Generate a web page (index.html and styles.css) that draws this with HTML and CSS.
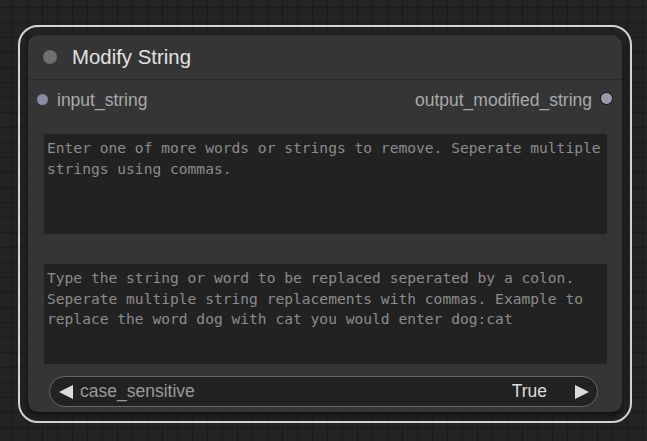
FILE: index.html
```html
<!DOCTYPE html>
<html>
<head>
<meta charset="utf-8">
<link rel="stylesheet" href="styles.css">
</head>
<body>
<div class="canvas">
  <div class="selection"></div>
  <div class="node">
    <div class="title">
      <span class="title-dot"></span>
      <span class="title-text">Modify String</span>
    </div>
    <div class="slots">
      <div class="slot slot-in"><span class="pin pin-in"></span><span>input_string</span></div>
      <div class="slot slot-out"><span>output_modified_string</span><span class="pin pin-out"></span></div>
    </div>
    <div class="widgets">
      <div class="textbox">Enter one of more words or strings to remove. Seperate multiple strings using commas.</div>
      <div class="textbox">Type the string or word to be replaced seperated by a colon. Seperate multiple string replacements with commas. Example to replace the word dog with cat you would enter dog:cat</div>
      <div class="combo">
        <span class="arrow arrow-left"></span>
        <span class="combo-label">case_sensitive</span>
        <span class="combo-value">True</span>
        <span class="arrow arrow-right"></span>
      </div>
    </div>
  </div>
</div>
</body>
</html>
```

FILE: styles.css
```css
html, body {
  margin: 0;
  padding: 0;
}
body {
  width: 647px;
  height: 441px;
  overflow: hidden;
  background-color: #222222;
  font-family: "Liberation Sans", Arial, sans-serif;
}
.canvas {
  position: relative;
  width: 647px;
  height: 441px;
  background-color: #232323;
  background-image:
    linear-gradient(#1b1b1b 1px, transparent 1px),
    linear-gradient(90deg, #1b1b1b 1px, transparent 1px);
  background-size: 15px 15px;
  background-position: 12px 7px;
}
.selection {
  position: absolute;
  left: 18px;
  top: 25px;
  width: 610px;
  height: 394px;
  border: 2px solid #d4d4d4;
  border-radius: 20px;
}
.node {
  position: absolute;
  left: 28px;
  top: 35px;
  width: 594px;
  height: 377px;
  background: #353535;
  border-radius: 10px;
  box-shadow: 0 3px 6px rgba(0, 0, 0, 0.55);
  display: flex;
  flex-direction: column;
}
.title {
  height: 44px;
  border-bottom: 1px solid #2a2a2a;
  display: flex;
  align-items: center;
  gap: 15px;
  padding-left: 15px;
}
.title-dot {
  width: 14px;
  height: 14px;
  border-radius: 50%;
  background: #6f6f6f;
}
.title-text {
  color: #e2e2e2;
  font-size: 20.4px;
}
.slots {
  margin-top: 10px;
  height: 20px;
  display: flex;
  justify-content: space-between;
  align-items: center;
  padding: 0 9px 0 9px;
  color: #a9a9a9;
  font-size: 17.5px;
}
.slot {
  display: flex;
  align-items: center;
  gap: 9px;
}
.slot-out {
  gap: 8px;
}
.pin {
  width: 11px;
  height: 11px;
  border-radius: 50%;
  background: #8a8aa0;
}
.pin-in {
  margin-top: -2px;
}
.pin-out {
  box-sizing: border-box;
  width: 13px;
  height: 13px;
  border: 1.5px solid #111;
  background: #9a9aaa;
  margin-top: -3px;
}
.widgets {
  margin-top: 24px;
  padding: 0 15px 0 16px;
  display: flex;
  flex-direction: column;
  gap: 30px;
}
.textbox {
  height: 100px;
  box-sizing: border-box;
  background: #222222;
  padding: 4px 3px 0 3px;
  color: #8c8c8c;
  font-family: "DejaVu Sans Mono", monospace;
  font-size: 14.6px;
  line-height: 20.5px;
}
.combo {
  margin: -18px 9px 0 5px;
  height: 31px;
  box-sizing: border-box;
  border: 1px solid #666;
  border-radius: 16px;
  background: #222222;
  display: flex;
  align-items: center;
  padding: 0 8px 0 9px;
  font-size: 17.5px;
}
.arrow {
  width: 0;
  height: 0;
  border-top: 7.5px solid transparent;
  border-bottom: 7.5px solid transparent;
}
.arrow-left {
  border-right: 14px solid #dcdcdc;
}
.arrow-right {
  border-left: 14px solid #dcdcdc;
}
.combo-label {
  color: #9a9a9a;
  margin-left: 7px;
  flex: 1;
}
.combo-value {
  color: #dcdcdc;
  margin-right: 28px;
}
```
